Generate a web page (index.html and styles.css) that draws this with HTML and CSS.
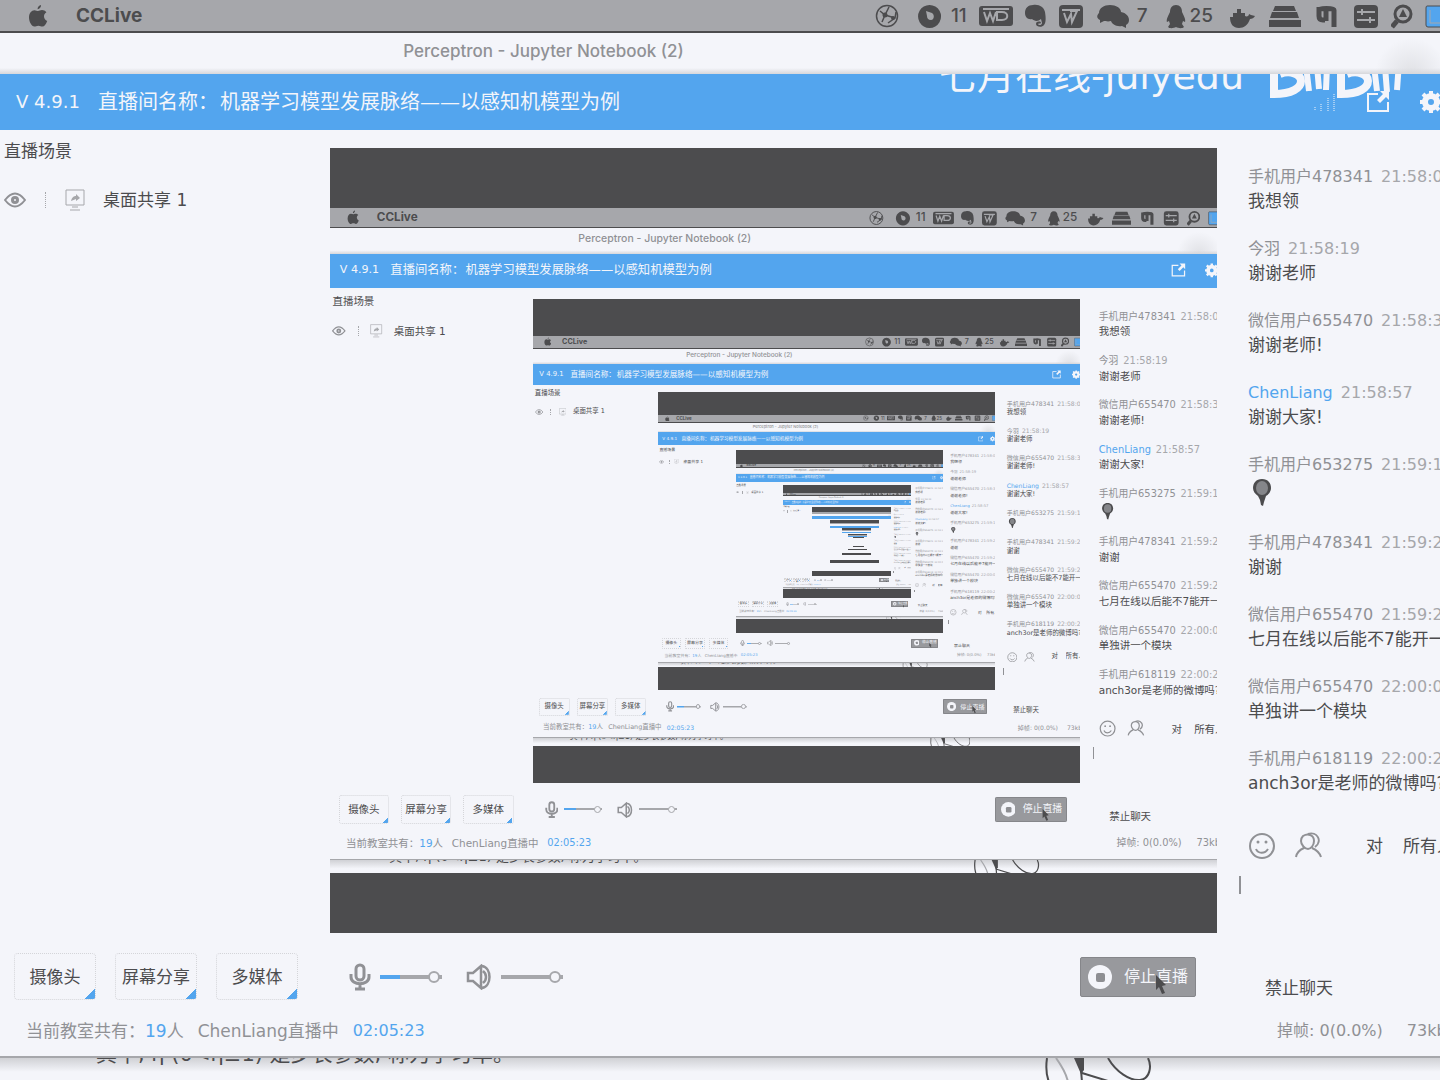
FILE: index.html
```html
<!DOCTYPE html>
<html lang="zh-CN">
<head>
<meta charset="utf-8">
<meta name="viewport" content="width=device-width, initial-scale=1">
<title>CCLive</title>
<link rel="stylesheet" href="styles.css">
</head>
<body>
<div class="screen">
  <header class="menubar">
    <svg class="apple" width="20" height="24" viewBox="0 0 20 24"><path d="M13 1c.2 2-1.300 4.200-3.400 4.300C9.400 3.300 11 1.200 13 1zM10 7c1.200 0 2.200-1 4-1 1.600 0 3.300.8 4.400 2.300-3.600 2.200-3 7.200.8 8.600C18 20 16.400 22.600 14.400 22.600c-1.500 0-2-.9-4-.9s-2.600.9-4 .9C3.600 22.600 1 17.800 1 13.600 1 9 3.600 6.200 6.400 6.200 8 6.200 9.200 7 10 7z"/></svg>
    <strong class="app-name">CCLive</strong>
    <div class="tray">
      <svg width="28" height="26" viewBox="0 0 28 26"><g fill="none" stroke="currentColor"><circle cx="12" cy="13" r="10.500" stroke-width="1.500"/><path stroke-width="1.500" d="M5 8l5 4 4-8M10 12l-3 7M10 12l10 3M13 20l7-5 1-6"/></g><circle cx="10" cy="12" r="2.500"/><circle cx="18" cy="15" r="2"/></svg>
      <span class="tray-item"><svg width="28" height="26" viewBox="0 0 28 26"><path fill-rule="evenodd" d="M14.500 2a11.500 11.500 0 1 0 .1 0zM11 8l6 2c3 2 2 7-1 7-3 0-4-2-4-4z"/></svg>11</span>
      <svg width="34" height="26" viewBox="0 0 34 26"><rect y="3" width="34" height="20" rx="3"/><path fill="none" stroke="#a6a7ab" stroke-width="2" d="M5 9l3 9 3-8 3 8 3-9M18 9v8h5c7 0 7-8 0-8zM4 6h26"/></svg>
      <svg width="22" height="26" viewBox="0 0 22 26"><path d="M8 2c6-1 11 2 12 7 1 6 1 11-1 13-2 3-8 2-8-1 0-3 5-3 5-1-1 1-2 0-3 1 1 2 4 1 4-1l-1-4c-3 3-7 2-9 0-4 1-7-2-7-6 0-5 3-8 8-8z"/></svg>
      <svg width="24" height="26" viewBox="0 0 24 26"><rect y="2" width="24" height="23" rx="4"/><path fill="none" stroke="#a6a7ab" stroke-width="2" d="M3 7h18M5 10l3 9 4-8 1 8 5-11h-7"/></svg>
      <span class="tray-item"><svg width="34" height="26" viewBox="0 0 34 26"><path d="M15 2c6 0 11 3 11 7 5 1 8 4 8 8 0 2-1 4-3 5v3l-4-2c-6 1-10-2-11-5-3 1-6 0-7 0l-4 2v-3C1 15 2 12 4 10 4 5 9 2 15 2z"/></svg>7</span>
      <span class="tray-item tight"><svg width="26" height="26" viewBox="0 0 26 26"><path d="M16 2c4 0 6 3 6 7 2 4 4 8 3 10l-2-1-1 3 2 3c-2 2-6 1-8 0-2 1-6 2-8 0l2-3-1-3-2 1c-1-2 1-6 3-10 0-4 2-7 6-7z"/></svg>25</span>
      <svg width="32" height="26" viewBox="0 0 32 26"><path d="M5 14h3v-4h4V6h4v4h4v3c2 1 4 0 4-2l2 1 4 1c-1 2-3 3-5 3-2 6-6 9-11 9-6 0-9-4-9-11z"/></svg>
      <svg width="32" height="26" viewBox="0 0 32 26"><path d="M6 3h19l2 5H4zM3 9h25l2 6H1zM0 17h32v7H0z"/></svg>
      <svg width="26" height="26" viewBox="0 0 26 26"><path fill="none" stroke="currentColor" stroke-width="5" d="M6 4v9q0 4 4 4h2M6 7c0-2 15-2 15 0v17M13 8v10"/></svg>
      <svg width="28" height="26" viewBox="0 0 28 26"><rect x="3" y="2" width="24" height="23" rx="4"/><path stroke="#a6a7ab" stroke-width="2" d="M6 9h18M11 6v6M6 17h18M19 14v6"/></svg>
      <svg width="22" height="26" viewBox="0 0 22 26"><g fill="none" stroke="currentColor"><circle cx="12" cy="11" r="8" stroke-width="3"/><path stroke-width="5" d="M6 18l-5 6"/></g><path d="M12 6l4 8H8z"/></svg>
      <svg width="15" height="26" viewBox="0 0 15 26"><path fill="#53a5ee" stroke="#4c4c4e" stroke-width="1" d="M16 3H2q-1 0-1 2v17q0 2 2 2h13"/><path fill="none" stroke="#a6a7ab" d="M5 7v13h11"/></svg>
    </div>
  </header>

  <div class="titlebar">Perceptron - Jupyter Notebook (2)</div>

  <div class="roombar">
    <span class="version">V 4.9.1</span>
    <span class="room-label">直播间名称：</span>
    <h1 class="room-name">机器学习模型发展脉络——以感知机模型为例</h1>
    <div class="watermark">
      <span>七月在线-julyedu</span>
      <svg width="136" height="48" viewBox="0 0 136 48"><g fill="none" stroke="currentColor" stroke-width="8"><path d="M6 0v42c18 0 27-6 27-13S22 18 12 22M73 0v42c18 0 27-6 27-13S89 18 79 22"/><path stroke-width="6" d="M38 14l3 25M48 2l3 35M59 14l-1 24M106 14l3 25M116 2l3 38M131 10l-2 28"/></g></svg>
    </div>
    <div class="room-tools">
      <svg class="signal" width="22" height="20" viewBox="0 0 22 20"><path stroke="currentColor" stroke-dasharray="1 1" d="M1 15v4M7 12v7M14 6v13M20 2v17"/></svg>
      <svg width="24" height="24" viewBox="0 0 24 24"><path fill="none" stroke="currentColor" stroke-width="2" d="M12 4H2v17h20V12"/><path d="M14 1h9v9l-3-3-6 6-3-3 6-6z"/></svg>
      <svg width="20" height="24" viewBox="0 0 20 24"><circle cx="11" cy="12" r="6" fill="none" stroke="currentColor" stroke-width="6"/><path fill="none" stroke="currentColor" stroke-width="4" d="M11 1v4M11 19v4M0 12h4M18 12h4M3 4l3 3M16 17l3 3M19 4l-3 3M6 17l-3 3"/></svg>
    </div>
  </div>

  <main class="room">
    <nav class="scenes">
      <h2 class="scenes-title">直播场景</h2>
      <div class="scene">
        <svg class="eye" width="22" height="16" viewBox="0 0 22 16"><path fill="none" stroke="currentColor" stroke-width="2" d="M1 8q10-13 20 0-10 13-20 0z"/><circle cx="11" cy="8" r="4"/><circle cx="11" cy="8" r="1" fill="#f4f5fa"/></svg>
        <svg class="monitor" width="20" height="22" viewBox="0 0 20 22"><path fill="none" stroke="currentColor" d="M1 1h18v15H1zM7 18h6M5 21h10"/><path d="M6 12c1-4 3-5 5-5V5l4 4-4 3v-2z"/></svg>
        <span>桌面共享 1</span>
      </div>
    </nav>

    <section class="preview">
      <div class="mirror" aria-hidden="true"></div>
    </section>

    <section class="controls">
      <div class="control-row">
        <div class="sources">
          <button class="source" type="button">摄像头</button>
          <button class="source" type="button">屏幕分享</button>
          <button class="source" type="button">多媒体</button>
        </div>
        <label class="volume">
          <svg width="22" height="28" viewBox="0 0 22 28"><g fill="none" stroke="currentColor" stroke-width="3"><rect x="7" y="2" width="8" height="15" rx="4"/><path d="M2 11v3c0 9 18 9 18 0v-3M11 20v6M6 26h10"/></g></svg>
          <input class="slider mic" type="range" value="96" aria-label="麦克风音量">
        </label>
        <label class="volume">
          <svg width="26" height="26" viewBox="0 0 26 26"><g fill="none" stroke="currentColor" stroke-width="2.500"><path d="M2 9h5l8-7v22l-8-7H2zM17 7c4 3 4 9 0 12M16 2c10 2 10 20 0 22"/></g></svg>
          <input class="slider" type="range" value="96" aria-label="扬声器音量">
        </label>
        <button class="record" type="button">
          <svg width="24" height="24" viewBox="0 0 24 24"><circle cx="12" cy="12" r="12"/><rect x="8" y="8" width="9" height="9" rx="2" fill="#8e8f93"/></svg>
          停止直播
          <svg class="pointer" width="12" height="20" viewBox="0 0 12 20"><path d="M1 0l10 10-4 1 3 7-3 1-3-7-3 3z"/></svg>
        </button>
      </div>
      <p class="status">
        <span>当前教室共有：<b>19</b>人</span>
        <span>ChenLiang直播中</span>
        <b class="elapsed">02:05:23</b>
      </p>
    </section>

    <aside class="chat">
      <ol class="messages">
        <li><p class="who"><span>手机用户478341</span><time>21:58:09</time></p><p class="said">我想领</p></li>
        <li><p class="who"><span>今羽</span><time>21:58:19</time></p><p class="said">谢谢老师</p></li>
        <li><p class="who"><span>微信用户655470</span><time>21:58:38</time></p><p class="said">谢谢老师!</p></li>
        <li><p class="who"><span class="host">ChenLiang</span><time>21:58:57</time></p><p class="said">谢谢大家!</p></li>
        <li><p class="who"><span>手机用户653275</span><time>21:59:12</time></p><p class="said sticker"><svg width="28" height="28" viewBox="0 0 28 28"><path fill="#4c4c4e" d="M14 0c6 0 9 4 9 9 0 4-3 7-5 8l-2 6-1 4-2-1-1-5-2-4c-3-2-5-5-5-8 0-5 3-9 9-9z"/><ellipse cx="14" cy="9" rx="6" ry="7" fill="#85868a"/></svg></p></li>
        <li><p class="who"><span>手机用户478341</span><time>21:59:23</time></p><p class="said">谢谢</p></li>
        <li><p class="who"><span>微信用户655470</span><time>21:59:25</time></p><p class="said">七月在线以后能不7能开一</p></li>
        <li><p class="who"><span>微信用户655470</span><time>22:00:03</time></p><p class="said">单独讲一个模块</p></li>
        <li><p class="who"><span>手机用户618119</span><time>22:00:23</time></p><p class="said">anch3or是老师的微博吗?</p></li>
      </ol>
      <div class="chat-tools">
        <svg width="28" height="28" viewBox="0 0 28 28"><g fill="none" stroke="currentColor" stroke-width="2"><circle cx="14" cy="14" r="12"/><path d="M8 17c2 5 9 5 12 0"/></g><circle cx="10" cy="10" r="1.500"/><circle cx="18" cy="10" r="1.500"/></svg>
        <svg width="30" height="28" viewBox="0 0 30 28"><g fill="none" stroke="currentColor" stroke-width="2"><path d="M9 4c5-3 11-1 11 5 0 4-3 8-6 8s-7-4-7-8q0-3 2-5zM10 16q-7 3-8 9M18 16q7 3 9 9M14 2c9-3 15 7 7 13"/></g></svg>
        <label class="target">对
          <select><option>所有人</option></select>
        </label>
      </div>
      <div class="compose"><textarea rows="3" aria-label="输入聊天内容"></textarea></div>
      <button class="mute" type="button">禁止聊天</button>
      <p class="net"><span>掉帧: 0(0.0%)</span><span>73kb/s</span></p>
    </aside>
  </main>

  <footer class="behind">
    <p>其中, η (0&lt;η≤1) 是步长参数, 称为学习率。</p>
    <svg width="110" height="24" viewBox="0 0 110 24"><g fill="none" stroke="#4c4c4e" stroke-width="2"><path d="M5 0q-2 14 2 24M38 0l2 24M66 0c8 14 22 23 32 22s12-14 8-22M40 15l26 8"/><path stroke="#a6a7ab" d="M14 0q10 14 12 24"/></g><path fill="#4c4c4e" d="M32 0h10v12l-3 4z"/></svg>
  </footer>
</div>
<script src="mirror.js"></script>
</body>
</html>
```
FILE: styles.css
```css
:root {
  --paper: #f4f5fa;
  --ink: #4c4c4e;
  --soft: #909195;
  --grey: #a6a7ab;
  --blue: #53a5ee;
}

* { box-sizing: border-box; }

body {
  margin: 0;
  background: var(--paper);
  color: var(--ink);
  font: 17px/24px "DejaVu Sans", "Noto Sans CJK SC", sans-serif;
  overflow-x: hidden;
}

h1, h2, p, ol { margin: 0; padding: 0; font-size: inherit; font-weight: inherit; }
ol { list-style: none; }
svg { display: block; flex: none; fill: currentColor; }
button, select, textarea { font: inherit; color: inherit; border: 0; padding: 0; background: none; appearance: none; }

.screen { width: 100%; overflow: hidden; background: var(--paper); }

/* system menu bar */
.menubar {
  display: flex;
  align-items: center;
  height: 33px;
  padding-left: 28px;
  background: var(--grey);
  border-bottom: 2px solid var(--ink);
  font-family: Inter, sans-serif;
}
.app-name { margin-left: 28px; font-size: 19px; }
.tray { display: flex; align-items: center; gap: 12px; margin-left: auto; font-size: 19px; font-weight: 500; }
.tray-item { display: flex; align-items: center; gap: 8px; }
.tray-item.tight { gap: 4px; }

.titlebar {
  height: 41px;
  padding: 6px 0 0 28%;
  background:
    linear-gradient(to top, #d6d7db, transparent 6px),
    radial-gradient(circle at 98% 100%, #e0e1e5, transparent 36px);
  color: var(--soft);
  font-family: Inter, sans-serif;
  font-weight: 500;
}

/* room header */
.roombar {
  position: relative;
  display: flex;
  align-items: center;
  height: 56px;
  padding-left: 16px;
  overflow: hidden;
  background: var(--blue);
  color: var(--paper);
  font-size: 20px;
}
.version { width: 82px; font-size: 18px; }
.room-label { width: 122px; white-space: nowrap; }
.room-name { white-space: nowrap; }
.room-tools { display: flex; align-items: center; gap: 30px; margin-left: auto; }
.watermark {
  position: absolute;
  top: -22px;
  right: 36px;
  display: flex;
  gap: 24px;
  font-size: 38px;
  line-height: 48px;
  white-space: nowrap;
}

.room { display: grid; grid-template-columns: 330px minmax(0, 1fr) 223px; }

/* scene list */
.scenes { padding: 9px 4px; }
.scene { display: flex; align-items: center; margin-top: 25px; }
.eye { margin-right: 19px; color: var(--soft); }
.monitor { margin-right: 18px; color: var(--grey); }
.scene::before { content: ""; order: 1; width: 1px; height: 16px; margin-right: 18px; border-left: 1px dotted var(--grey); }
.eye { order: 0; }
.scene::before ~ * { order: 2; }
.monitor, .scene span { order: 2; }

/* live picture of the desktop */
.preview { margin-top: 18px; padding: 60px 0; background: var(--ink); }
.mirror { aspect-ratio: 4 / 3; overflow: hidden; background: var(--paper); }
.mirror > .screen { zoom: 0.616; }

/* bottom controls */
.controls { grid-column: 1 / 3; grid-row: 2; padding: 20px 21px 13px 14px; }
.control-row { display: flex; align-items: center; height: 47px; }
.sources { display: flex; gap: 19px; margin-right: 51px; }
.source {
  width: 82px;
  height: 47px;
  border: 1px dotted #d4d5d9;
  border-radius: 4px;
  background: linear-gradient(135deg, transparent 50%, var(--blue) 50%) right bottom / 10px 10px no-repeat;
}
.volume { display: flex; align-items: center; gap: 9px; margin-right: 24px; color: var(--soft); }
.slider {
  width: 62px;
  height: 12px;
  margin: 0;
  appearance: none;
  background: linear-gradient(var(--grey), var(--grey)) center / 100% 4px no-repeat;
}
.slider.mic { background: linear-gradient(to right, var(--blue) 20px, var(--grey) 20px) center / 100% 4px no-repeat; }
.slider::-webkit-slider-thumb {
  appearance: none;
  width: 12px;
  height: 12px;
  border: 2px solid var(--grey);
  border-radius: 50%;
  background: var(--paper);
}
.record {
  position: relative;
  display: flex;
  align-items: center;
  gap: 12px;
  width: 116px;
  height: 40px;
  margin-left: auto;
  padding-left: 7px;
  border: 1px solid #85868a;
  border-radius: 2px;
  background: #98999d;
  color: var(--paper);
  font-size: 16px;
  white-space: nowrap;
}
.pointer { position: absolute; left: 74px; top: 17px; color: var(--ink); }
.status { display: flex; gap: 14px; margin-top: 19px; padding-left: 12px; color: var(--soft); }
.status b { font-weight: 400; color: var(--blue); }
.elapsed { font-size: 16px; }

/* chat */
.chat {
  grid-column: 3;
  grid-row: 1 / 3;
  display: flex;
  flex-direction: column;
  padding: 35px 0 13px 31px;
  overflow: hidden;
  white-space: nowrap;
}
.messages { display: grid; gap: 24px; }
.who { display: flex; gap: 8px; color: var(--soft); font-size: 16px; }
.who time { color: var(--grey); }
.who .host { color: var(--blue); }
.sticker { height: 30px; padding-top: 2px; }
.chat-tools { display: flex; align-items: center; gap: 18px; margin-top: 37px; color: var(--soft); }
.target { display: flex; gap: 20px; margin-left: 24px; color: var(--ink); }
.compose { position: relative; margin-top: 13px; }
.compose::before { content: ""; position: absolute; left: -9px; top: 3px; width: 2px; height: 18px; background: var(--soft); }
.compose textarea { display: block; width: 100%; resize: none; outline: 0; }
.mute { align-self: flex-start; margin: auto 0 19px 17px; }
.net { display: flex; gap: 24px; padding-left: 29px; color: var(--soft); font-size: 16px; }

/* document behind the window */
.behind {
  display: flex;
  justify-content: space-between;
  height: 24px;
  padding: 0 20% 0 96px;
  overflow: hidden;
  border-top: 2px solid var(--grey);
  background: linear-gradient(#d0d1d5, transparent 14px);
}
.behind p { margin-top: -16px; font-size: 21px; white-space: nowrap; }

/* copies too small to read keep only their bars */
.far .menubar, .far .behind { border-color: transparent; }
.far .controls { height: 123px; }
```
FILE: mirror.js
```js
// The preview shows the shared desktop, which itself contains the preview.
const LEVELS = 9;
const READABLE_LEVELS = 5;
const desktop = document.querySelector('.screen');
const template = desktop.cloneNode(true);
template.querySelector('.watermark').remove();
template.querySelector('.signal').remove();

let slot = desktop.querySelector('.mirror');
slot.inert = true;
for (let level = 0; level < LEVELS; level++) {
  const copy = template.cloneNode(true);
  if (level >= READABLE_LEVELS) {
    copy.classList.add('far');
    copy.querySelectorAll('.menubar, .titlebar, .roombar, .scenes, .controls, .chat, .behind')
      .forEach((part) => part.replaceChildren());
  }
  slot.append(copy);
  slot = copy.querySelector('.mirror');
}
```
